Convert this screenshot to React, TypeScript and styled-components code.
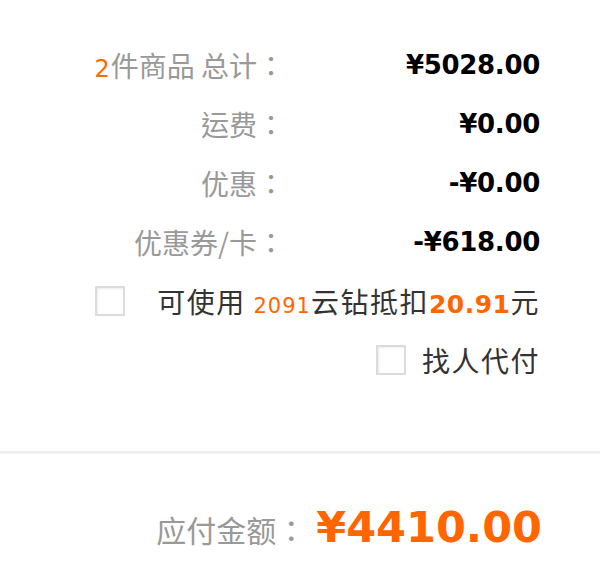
import { createGlobalStyle, styled } from "styled-components";

const GlobalStyle = createGlobalStyle`
  html, body {
    margin: 0;
    padding: 0;
    background: #fff;
  }
  body {
    font-family: "Noto Sans CJK TC", "DejaVu Sans", sans-serif;
  }
`;

const Page = styled.div`
  width: 600px;
  height: 573px;
  display: flex;
  flex-direction: column;
  background: #fff;
`;

const Summary = styled.div`
  display: flex;
  flex-direction: column;
  padding: 35px 60px 0 0;
`;

const Row = styled.div`
  display: flex;
  justify-content: flex-end;
  align-items: center;
  height: 59px;
`;

const Label = styled.div<{ $size?: number }>`
  font-size: ${(p) => p.$size ?? 28}px;
  color: #999;
  text-align: right;
  white-space: nowrap;
`;

const Value = styled.div`
  width: 255px;
  text-align: right;
  font-family: "DejaVu Sans", sans-serif;
  font-weight: 700;
  font-size: 26px;
  color: #000;
  letter-spacing: -0.3px;
`;

const Orange = styled.span<{ $bold?: boolean; $size: number }>`
  color: #ff6600;
  font-family: "DejaVu Sans", sans-serif;
  font-weight: ${(p) => (p.$bold ? 700 : 400)};
  font-size: ${(p) => p.$size}px;
  letter-spacing: ${(p) => (p.$bold ? "0.5px" : "1px")};
`;

const CheckRow = styled.label<{ $gap: number }>`
  display: flex;
  align-items: center;
  justify-content: flex-end;
  gap: ${(p) => p.$gap}px;
  height: 59px;
`;

const Box = styled.span`
  width: 26px;
  height: 26px;
  border: 2px solid #dcdcdc;
  background: #fff;
  box-shadow: inset 1px 1px 2px rgba(0, 0, 0, 0.08);
`;

const CheckText = styled.span`
  font-size: 28px;
  color: #333;
  white-space: nowrap;
  letter-spacing: 1.5px;
`;

const Divider = styled.div`
  margin-top: 62px;
  height: 2px;
  background: #ececec;
  border-bottom: 1px solid #f4f4f4;
`;

const Total = styled.div`
  display: flex;
  justify-content: flex-end;
  align-items: baseline;
  gap: 10px;
  padding: 48px 58px 0 0;
`;

const TotalAmount = styled.div`
  font-family: "DejaVu Sans", sans-serif;
  font-weight: 700;
  font-size: 43px;
  color: #ff6600;
`;

const rows = [
  { label: "运费：", value: "¥0.00" },
  { label: "优惠：", value: "-¥0.00" },
  { label: "优惠券/卡：", value: "-¥618.00" },
];

function App() {
  return (
    <Page>
      <GlobalStyle />
      <Summary>
        <Row>
          <Label>
            <Orange $size={24}>2</Orange>件商品 总计：
          </Label>
          <Value>¥5028.00</Value>
        </Row>
        {rows.map((r) => (
          <Row key={r.label}>
            <Label>{r.label}</Label>
            <Value>{r.value}</Value>
          </Row>
        ))}
        <CheckRow $gap={32}>
          <Box />
          <CheckText>
            可使用 <Orange $size={21}>2091</Orange>云钻抵扣
            <Orange $bold $size={25}>20.91</Orange>元
          </CheckText>
        </CheckRow>
        <CheckRow $gap={16}>
          <Box />
          <CheckText>找人代付</CheckText>
        </CheckRow>
      </Summary>
      <Divider />
      <Total>
        <Label $size={30}>应付金额：</Label>
        <TotalAmount>¥4410.00</TotalAmount>
      </Total>
    </Page>
  );
}

export default App;
